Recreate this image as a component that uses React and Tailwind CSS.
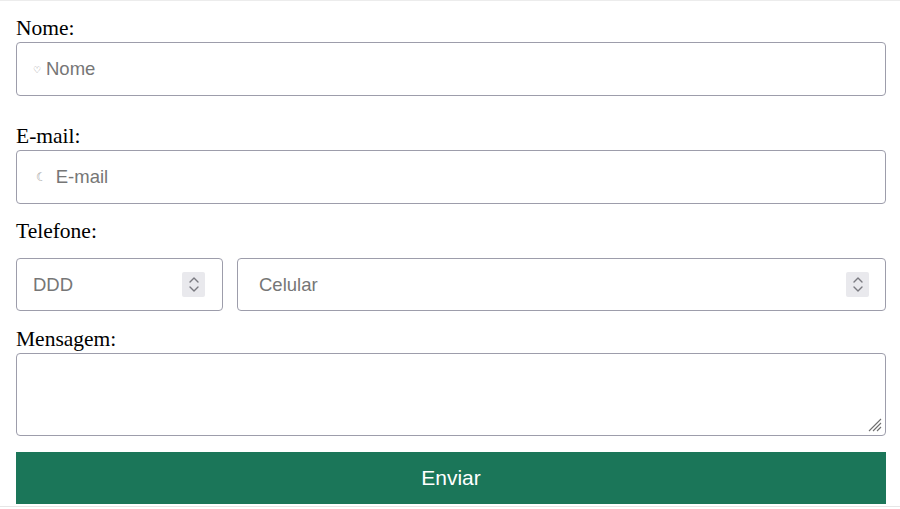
export default function App() {
  const label = "block font-['Liberation_Serif',serif] text-[21.5px] leading-[26px] text-black";
  const box = "flex items-center border border-[#9d9dab] rounded-[4px] bg-white font-['Liberation_Sans',Arial,sans-serif] text-[18.5px] text-[#767676]";

  const Spinner = () => (
    <div className="w-[23px] h-[25px] bg-[#e9e9ed] rounded-[2px] flex flex-col items-center justify-center gap-[3px]">
      <svg width="10" height="6" viewBox="0 0 10 6" fill="none" stroke="#7a7a80" strokeWidth="1.4" strokeLinecap="round" strokeLinejoin="round">
        <path d="M1 5 L5 1 L9 5" />
      </svg>
      <svg width="10" height="6" viewBox="0 0 10 6" fill="none" stroke="#7a7a80" strokeWidth="1.4" strokeLinecap="round" strokeLinejoin="round">
        <path d="M1 1 L5 5 L9 1" />
      </svg>
    </div>
  );

  return (
    <div className="w-[900px] h-[509px] bg-white border-t border-[#ececec] overflow-hidden">
      <div className="pl-4 pr-[14px] pt-[14px]">
        <label className={label}>Nome:</label>
        <div className={`${box} mt-px h-[54px] pl-4`}>
          <span className="text-[9px] text-[#8a8a8a] mr-[5px] mt-[3px]">♡</span>
          <span>Nome</span>
        </div>

        <label className={`${label} mt-[27px]`}>E-mail:</label>
        <div className={`${box} mt-px h-[54px] pl-4`}>
          <span className="text-[12px] text-[#9a9a9a] mr-[9px] ml-[3px] font-['DejaVu_Sans',sans-serif]">☾</span>
          <span>E-mail</span>
        </div>

        <label className={`${label} mt-[14px]`}>Telefone:</label>
        <div className="flex gap-[14px] mt-[14px]">
          <div className={`${box} w-[207px] h-[53px] pl-4 pr-[17px] justify-between`}>
            <span>DDD</span>
            <Spinner />
          </div>
          <div className={`${box} flex-1 h-[53px] pl-[21px] pr-[16px] justify-between`}>
            <span>Celular</span>
            <Spinner />
          </div>
        </div>

        <label className={`${label} mt-[15px]`}>Mensagem:</label>
        <div className="relative mt-px">
          <textarea className="block w-full h-[83px] border border-[#9d9dab] rounded-[4px] bg-white resize-none outline-none" />
          <svg className="absolute right-[4px] bottom-[4px]" width="14" height="14" viewBox="0 0 14 14" stroke="#6f6f6f" strokeWidth="1.1">
            <path d="M1 13 L13 1 M5 13 L13 5 M9 13 L13 9" />
          </svg>
        </div>

        <button className="mt-4 w-full h-[52px] bg-[#1b7659] text-white font-['Liberation_Sans',Arial,sans-serif] text-[21px] flex items-center justify-center">
          Enviar
        </button>
      </div>
      <div className="mt-[2px] border-t border-[#e6e6e6]" />
    </div>
  );
}
